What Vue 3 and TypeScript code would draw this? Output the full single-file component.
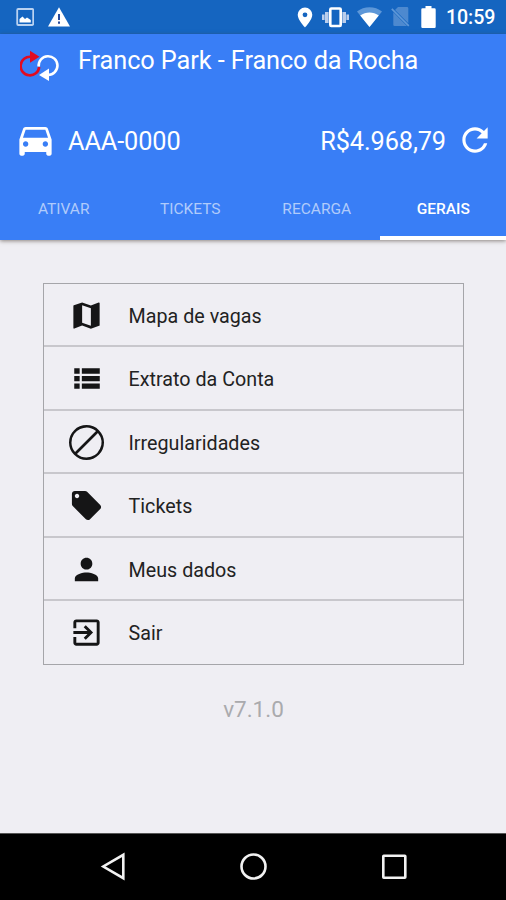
<script setup lang="ts">
import { ref } from 'vue'

interface MenuItem {
  label: string
  icon: string
}

const tabs: string[] = ['ATIVAR', 'TICKETS', 'RECARGA', 'GERAIS']
const activeTab = ref(3)

const items: MenuItem[] = [
  { label: 'Mapa de vagas', icon: 'M20.5 3l-.16.03L15 5.1 9 3 3.36 4.9c-.21.07-.36.25-.36.48V20.5c0 .28.22.5.5.5l.16-.03L9 18.9l6 2.1 5.64-1.9c.21-.07.36-.25.36-.48V3.5c0-.28-.22-.5-.5-.5zM15 19l-6-2.11V5l6 2.11V19z' },
  { label: 'Extrato da Conta', icon: 'M3.6 13.9h3.7v-3.700H3.600zm0 5.200h3.700v-3.700H3.600zm0-10.400h3.700V5H3.600zm5.200 5.200h12.300v-3.700H8.800zm0 5.200h12.300v-3.700H8.800zM8.800 5v3.700h12.300V5z' },
  { label: 'Irregularidades', icon: 'M12 0a12 12 0 1 0 0 24A12 12 0 0 0 12 0zM1.700 12A10.300 10.300 0 0 1 18.550 4.150L4.150 18.550A10.200 10.200 0 0 1 1.700 12zM12 22.300A10.200 10.200 0 0 1 5.450 19.850L19.850 5.450A10.300 10.300 0 0 1 12 22.300z' },
  { label: 'Tickets', icon: 'M21.410 11.580l-9-9C12.050 2.220 11.550 2 11 2H4c-1.100 0-2 .9-2 2v7c0 .55.220 1.050.590 1.420l9 9c.360.360.860.580 1.410.580s1.050-.220 1.410-.590l7-7c.370-.360.590-.860.590-1.410s-.230-1.060-.590-1.420zM5.500 7C4.670 7 4 6.330 4 5.500S4.670 4 5.500 4 7 4.670 7 5.500 6.330 7 5.500 7z' },
  { label: 'Meus dados', icon: 'M12 12c2.210 0 4-1.790 4-4s-1.790-4-4-4-4 1.790-4 4 1.790 4 4 4zm0 2c-2.670 0-8 1.340-8 4v2h16v-2c0-2.660-5.330-4-8-4z' },
  { label: 'Sair', icon: 'M10.090 15.590L11.500 17l5-5-5-5-1.410 1.410L12.670 11H3v2h9.670l-2.580 2.590zM19 3H5c-1.110 0-2 .9-2 2v4h2V5h14v14H5v-4H3v4c0 1.100.890 2 2 2h14c1.100 0 2-.9 2-2V5c0-1.100-.9-2-2-2z' },
]
</script>

<template>
  <div class="screen">
    <div class="status">
      <svg class="picture" viewBox="0 0 18 18" width="18" height="18">
        <rect x="1.200" y="1" width="16" height="16" rx="1" fill="none" stroke="#b9d2f1" stroke-width="1.800" />
        <path d="M3.500 14.500V11l3-2.500L9 11l2-1.500 3.800 2.500v2.500z" fill="#fff" />
      </svg>
      <svg class="warning" viewBox="0 0 22 20" width="22" height="20">
        <path d="M11 .3L22 19.500H0z" fill="#fff" />
        <path d="M10 7h2v6h-2zM10 14.500h2v2.200h-2z" fill="#264a9d" />
      </svg>
      <svg class="pin" viewBox="0 0 16 21" width="16" height="21">
        <path fill-rule="evenodd" d="M8 .5A7.300 7.300 0 0 0 .7 7.800C.7 13 8 20.500 8 20.500s7.300-7.500 7.300-12.700A7.300 7.300 0 0 0 8 .5zm0 4.900a2.400 2.400 0 1 1 0 4.800 2.400 2.400 0 0 1 0-4.800z" fill="#fff" />
      </svg>
      <svg class="vibrate" viewBox="0 0 27 21" width="27" height="21">
        <path d="M0 7.500h2.600v5.500H0zM3 5h3.600v11H3zM20.400 5H24v11h-3.600zM24.400 7.500H27v5.500h-2.600z" fill="#b9cdec" />
        <rect x="8.300" y="1.500" width="10.400" height="17.500" rx="1" fill="none" stroke="#fff" stroke-width="2.600" />
      </svg>
      <svg class="wifi" viewBox="0 0 25 20" width="25" height="20">
        <path d="M0 4.600C7-1.200 18-1.200 25 4.600L12.500 20z" fill="#5d97d8" />
        <path d="M3.200 8.600C8.800 4.400 16.200 4.400 21.800 8.600L12.500 20z" fill="#fff" />
      </svg>
      <svg class="sim" viewBox="0 0 19 20" width="19" height="20">
        <path d="M7 0h9q1.300 0 1.300 1.300v15L4 3zM2.300 5.200L16 19H3.600q-1.300 0-1.300-1.300z" fill="#4d89cf" />
        <path d="M.8 1.800l17 17" stroke="#5f98d8" stroke-width="1.700" />
      </svg>
      <svg class="battery" viewBox="0 0 15 22" width="15" height="22">
        <path d="M4.500 0h6v2.200h3q1.200 0 1.200 1.200v17.300q0 1.300-1.200 1.300h-12Q.3 22 .3 20.700V3.400q0-1.200 1.200-1.200h3z" fill="#fff" />
      </svg>
      <span class="clock">10:59</span>
    </div>

    <header class="header">
      <div class="title-row">
        <svg class="logo" viewBox="0 0 40 32" width="40" height="32">
          <g fill="none" stroke-width="2.600">
            <path d="M11 6.800A9.300 9.300 0 1 0 19.200 17" stroke="#e20b20" />
            <path d="M18.700 16.500A9.400 9.400 0 1 1 28 25" stroke="#fff" />
          </g>
          <path d="M10 .7l9.500 6-9.500 6z" fill="#e20b20" />
          <path d="M29 18.500v12.500l-10-6z" fill="#fff" />
        </svg>
        <h1 class="title">Franco Park - Franco da Rocha</h1>
      </div>
      <div class="account">
        <svg class="car" viewBox="0 0 24 24" width="43" height="43">
          <path fill="#fff" d="M18.920 6.010C18.720 5.420 18.160 5 17.500 5h-11c-.660 0-1.210.420-1.420 1.010L3 12v8c0 .55.450 1 1 1h1c.550 0 1-.450 1-1v-1h12v1c0 .55.450 1 1 1h1c.550 0 1-.450 1-1v-8l-2.080-5.990zM6.500 16c-.830 0-1.500-.670-1.500-1.500S5.670 13 6.500 13s1.500.670 1.500 1.500S7.330 16 6.500 16zm11 0c-.830 0-1.500-.670-1.500-1.500s.670-1.500 1.500-1.500 1.500.670 1.500 1.500-.670 1.500-1.500 1.500zM5 11l1.500-4.500h11L19 11H5z" />
        </svg>
        <span class="plate">AAA-0000</span>
        <span class="balance">R$4.968,79</span>
        <svg class="refresh" viewBox="0 0 24 24" width="38" height="38">
          <path fill="#fff" d="M17.650 6.350C16.200 4.900 14.210 4 12 4c-4.420 0-7.990 3.580-7.990 8s3.570 8 7.990 8c3.730 0 6.840-2.550 7.730-6h-2.080c-.820 2.330-3.040 4-5.650 4-3.310 0-6-2.690-6-6s2.690-6 6-6c1.660 0 3.140.690 4.220 1.780L13 11h7V4l-2.350 2.350z" />
        </svg>
      </div>
      <nav class="tabs">
        <button
          v-for="(tab, i) in tabs"
          :key="tab"
          class="tab"
          :class="{ active: i === activeTab }"
          @click="activeTab = i"
        >{{ tab }}</button>
      </nav>
    </header>

    <main class="content">
      <ul class="menu">
        <li v-for="item in items" :key="item.label" class="item">
          <svg class="item-icon" viewBox="0 0 24 24" width="35" height="35">
            <path :d="item.icon" />
          </svg>
          <span class="item-label">{{ item.label }}</span>
        </li>
      </ul>
      <p class="version">v7.1.0</p>
    </main>

    <footer class="navbar">
      <svg viewBox="0 0 32 32" width="32" height="32">
        <path d="M26.300 4.800v23.400L6.300 16.500z" />
      </svg>
      <svg viewBox="0 0 32 32" width="32" height="32">
        <circle cx="15.500" cy="16.500" r="12" />
      </svg>
      <svg viewBox="0 0 32 32" width="32" height="32">
        <rect x="5.300" y="5.800" width="22" height="22" rx=".5" />
      </svg>
    </footer>
  </div>
</template>

<style>
body {
  margin: 0;
}
</style>

<style scoped>
.screen {
  display: flex;
  flex-direction: column;
  width: 506px;
  height: 900px;
  overflow: hidden;
  background: #efeef3;
  font-family: Roboto, sans-serif;
}

.screen svg {
  display: block;
  flex: none;
}

.status {
  box-sizing: border-box;
  display: flex;
  align-items: center;
  height: 34px;
  padding: 0 11px 0 16px;
  background: #1565c0;
}

.warning {
  margin-left: 14px;
}

.pin {
  margin-left: auto;
}

.vibrate {
  margin-left: 9px;
}

.wifi {
  margin-left: 8px;
}

.sim {
  margin-left: 9px;
}

.battery {
  margin-left: 11px;
}

.clock {
  width: 49px;
  padding-top: 2px;
  margin-left: 10px;
  color: #fff;
  font-size: 19.600px;
  font-weight: 500;
  line-height: 32px;
  letter-spacing: -0.1px;
  white-space: nowrap;
}

.header {
  position: relative;
  z-index: 1;
  display: flex;
  flex-direction: column;
  height: 206px;
  flex: none;
  background: #397ef6;
  box-shadow: 0 1px 4px rgba(70, 60, 50, 0.6);
  color: #fff;
}

.title-row {
  display: flex;
  height: 71px;
}

.logo {
  margin: 16px 0 0 20px;
}

.title {
  margin: 12px 0 0 18px;
  font-size: 25.300px;
  font-weight: 400;
  line-height: 30px;
  letter-spacing: -0.080px;
  white-space: nowrap;
}

.account {
  display: flex;
  align-items: center;
  height: 72px;
  padding: 0 12px 0 14px;
  font-size: 25.300px;
  letter-spacing: -0.1px;
}

.car {
  margin-bottom: 3px;
}

.plate {
  margin-left: 11px;
}

.balance {
  margin-left: auto;
}

.refresh {
  margin: 0 0 2px 10px;
}

.tabs {
  display: grid;
  grid-template-columns: repeat(4, 1fr);
  height: 63px;
}

.tab {
  padding: 5px 0 0 1px;
  border: 0;
  border-bottom: 4px solid transparent;
  background: none;
  color: #b0cbfb;
  font: 400 15.500px/54px Roboto, sans-serif;
}

.tab.active {
  border-bottom-color: #fff;
  color: #fff;
  font-weight: 500;
}

.content {
  flex: 1;
  padding: 43px 42px 0 43px;
}

.menu {
  margin: 0;
  padding: 0;
  border: 1px solid #a5a5a9;
  list-style: none;
}

.item {
  box-sizing: border-box;
  display: flex;
  align-items: center;
  height: 63.400px;
  padding: 1.500px 0 0 25px;
  border-bottom: 2px solid #c8c7cc;
}

.item:last-child {
  padding-top: 0;
  border-bottom: 0;
}

.item-icon {
  fill: #151516;
}

.item-label {
  padding-top: 2px;
  margin-left: 24.500px;
  color: #222;
  font-size: 19.700px;
  letter-spacing: 0.020px;
}

.version {
  margin: 30px 0 0;
  color: #aaaaad;
  font-size: 22.500px;
  line-height: 28px;
  text-align: center;
}

.navbar {
  box-sizing: border-box;
  display: flex;
  align-items: center;
  justify-content: space-between;
  height: 67px;
  flex: none;
  padding: 0 96px 2px 97px;
  border-top: 1px solid #555;
  background: #000;
}

.navbar svg {
  fill: none;
  stroke: #f2f2f2;
  stroke-width: 2.600;
}
</style>
